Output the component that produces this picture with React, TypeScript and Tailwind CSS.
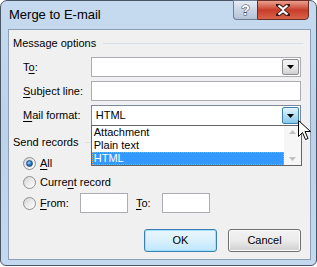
import React from "react";

const U = ({ c }: { c: string }) => <span className="underline underline-offset-[2px]">{c}</span>;

const Arrow = () => (
  <svg width="7" height="4" viewBox="0 0 7 4"><path d="M0 0H7L3.5 4Z" fill="#000" /></svg>
);

const Radio = ({ checked }: { checked?: boolean }) => (
  <div className="w-[13px] h-[13px] rounded-full border border-[#8e8f8f] bg-gradient-to-br from-[#d2d2d2] via-[#ececec] to-[#ffffff] flex items-center justify-center shrink-0">
    {checked && (
      <div className="w-[7px] h-[7px] rounded-full border border-[#1f4f8a] bg-[radial-gradient(circle_at_40%_35%,#9fdcff_0%,#2f7fcc_45%,#0b3a75_100%)]" />
    )}
  </div>
);

const Header = ({ text }: { text: string }) => (
  <div className="flex items-center h-[14px] pl-[4px] pr-[7px]">
    <span>{text}</span>
    <div className="flex-1 h-px bg-[#d5dfe5] ml-[7px]" />
  </div>
);

export default function App() {
  return (
    <div className="w-[317px] h-[267px] bg-white" style={{ fontFamily: '"Liberation Sans", Arial, sans-serif' }}>
      <div className="relative w-[317px] h-[266px] rounded-t-[7px] rounded-b-[6px] border border-[#4a5566] bg-gradient-to-b from-[#c6daef] via-[#bbd2ea] to-[#c4d9ef] flex flex-col pl-[7px] pr-[5px] pb-[5px] text-[11px] text-black">
        {/* title bar */}
        <div className="h-[28px] flex shrink-0 -ml-[7px] -mr-[5px]">
          <div className="pl-[8px] pt-[6px] text-[13px] leading-[16px]">Merge to E-mail</div>
          <div className="ml-auto mr-[7px] flex self-start -mt-px">
            <div className="w-[24px] h-[20px] rounded-bl-[4px] border border-[#6e7e94] border-r-0 bg-gradient-to-b from-[#e6ecf3] via-[#c9d5e3] to-[#b4c4d8] flex items-center justify-center">
              <span className="text-white font-bold text-[14px] leading-none [-webkit-text-stroke:1px_#3f4a5a] [paint-order:stroke_fill]">?</span>
            </div>
            <div className="w-[52px] h-[20px] rounded-br-[4px] border border-[#6b2f27] bg-gradient-to-b from-[#e8a08e] via-[#c83b2a] to-[#d8634a] flex items-center justify-center">
              <svg width="14" height="12" viewBox="0 0 14 12">
                <path d="M2 1L7 5L12 1M2 11L7 7L12 11" stroke="#3a1a16" strokeWidth="4" fill="none" strokeLinecap="square" />
                <path d="M2.5 1.5L7 5.2L11.5 1.5M2.5 10.5L7 6.8L11.5 10.5" stroke="#fff" strokeWidth="2.2" fill="none" />
              </svg>
            </div>
          </div>
        </div>

        {/* client area */}
        <div className="flex-1 bg-[#f0f0f0] border border-[#8d9fb5] flex flex-col">
          <div className="mt-[6px]">
            <Header text="Message options" />
          </div>

          <div className="flex items-center mt-[7px] h-[20px] pr-[9px]">
            <div className="w-[82px] pl-[14px]">T<U c="o" />:</div>
            <div className="w-[211px] h-[20px] border border-[#abadb3] bg-white flex justify-end items-stretch p-px">
              <div className="w-[17px] border border-[#8b8b8b] rounded-[2px] bg-gradient-to-b from-[#f2f2f2] via-[#ebebeb] to-[#cfcfcf] flex items-center justify-center">
                <Arrow />
              </div>
            </div>
          </div>

          <div className="flex items-center mt-[4px] h-[20px] pr-[9px]">
            <div className="w-[82px] pl-[14px]"><U c="S" />ubject line:</div>
            <div className="w-[211px] h-[20px] border border-[#abadb3] bg-white" />
          </div>

          <div className="flex items-center mt-[4px] h-[21px] pr-[9px]">
            <div className="w-[82px] pl-[14px]"><U c="M" />ail format:</div>
            <div className="relative w-[211px] h-[21px] border border-[#7a8a9c] bg-white flex items-stretch p-px">
              <div className="flex-1 pl-[3px] flex items-center">HTML</div>
              <div className="w-[17px] border border-[#3c7fb1] rounded-[2px] bg-gradient-to-b from-[#e5f4fc] via-[#b3def5] to-[#86c6e8] flex items-center justify-center">
                <Arrow />
              </div>
              {/* dropdown list */}
              <div className="absolute left-[-1px] top-full w-[211px] h-[41px] border border-[#646464] bg-white flex z-10">
                <div className="flex-1 flex flex-col leading-[13px]">
                  <div className="h-[13px] pl-[2px]">Attachment</div>
                  <div className="h-[13px] pl-[2px]">Plain text</div>
                  <div className="h-[13px] pl-[2px] bg-[#3399ff] text-white outline-1 outline-dotted outline-[#e0a060] -outline-offset-1">HTML</div>
                </div>
                <div className="w-[17px] bg-[#f6f6f6] flex flex-col justify-between items-center py-[4px]">
                  <svg width="7" height="4" viewBox="0 0 7 4"><path d="M0 4H7L3.5 0Z" fill="#c0c0c0" /></svg>
                  <svg width="7" height="4" viewBox="0 0 7 4"><path d="M0 0H7L3.5 4Z" fill="#c0c0c0" /></svg>
                </div>
              </div>
            </div>
          </div>

          <div className="mt-[9px]">
            <Header text="Send records" />
          </div>

          <div className="flex items-center mt-[6px] h-[16px] pl-[14px]">
            <Radio checked />
            <span className="ml-[4px]"><U c="A" />ll</span>
          </div>
          <div className="flex items-center mt-[3px] h-[16px] pl-[14px]">
            <Radio />
            <span className="ml-[4px]">Curre<U c="n" />t record</span>
          </div>
          <div className="flex items-center mt-[3px] h-[20px] pl-[14px]">
            <Radio />
            <span className="ml-[4px] w-[40px]"><U c="F" />rom:</span>
            <div className="w-[48px] h-[20px] border border-[#abadb3] bg-white" />
            <span className="ml-[8px] w-[26px]"><U c="T" />o:</span>
            <div className="w-[48px] h-[20px] border border-[#abadb3] bg-white" />
          </div>

          <div className="flex justify-end gap-[11px] mt-[16px] pr-[9px]">
            <div className="w-[73px] h-[23px] rounded-[3px] border border-[#3c7fb1] bg-gradient-to-b from-[#eaf6fd] via-[#d9f0fc] to-[#bee6fd] shadow-[inset_0_0_0_1px_#9fe0fb] flex items-center justify-center">OK</div>
            <div className="w-[73px] h-[23px] rounded-[3px] border border-[#707070] bg-gradient-to-b from-[#f2f2f2] via-[#ebebeb] to-[#cfcfcf] shadow-[inset_0_0_0_1px_#fcfcfc] flex items-center justify-center">Cancel</div>
          </div>
        </div>

        {/* mouse cursor */}
        <svg className="absolute left-[297px] top-[119px] z-20" width="13" height="22" viewBox="0 0 13 22">
          <path d="M0.5 0.5V16.5L4.5 12.5L7.5 19.5L10 18.5L7 11.5H12.5Z" fill="#fff" stroke="#000" strokeWidth="1" strokeLinejoin="miter" />
        </svg>
      </div>
    </div>
  );
}
